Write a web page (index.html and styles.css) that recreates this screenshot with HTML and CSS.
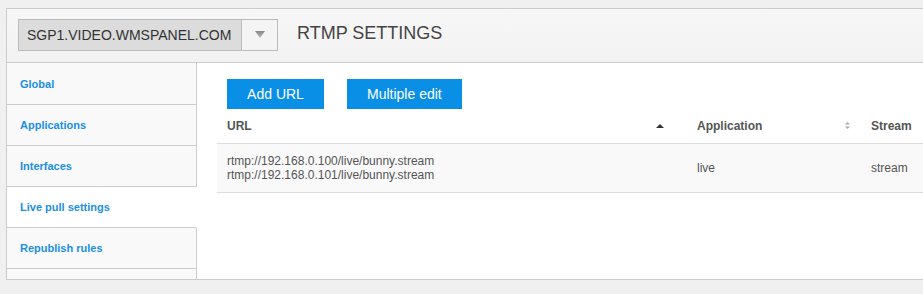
FILE: index.html
```html
<!DOCTYPE html>
<html lang="en">
<head>
  <meta charset="UTF-8">
  <title>RTMP Settings</title>
  <link rel="stylesheet" href="styles.css">
</head>
<body>

  <div class="panel">
    <!-- Server selector + page title -->
    <div class="panel-header">
      <div class="server-select">
        <span class="server-name">SGP1.VIDEO.WMSPANEL.COM</span>
        <span class="server-toggle">
          <svg width="10" height="7" viewBox="0 0 10 7">
            <defs>
              <linearGradient id="caret" x1="0" y1="0" x2="0" y2="1">
                <stop offset="0" stop-color="#8a8a8a"/>
                <stop offset="1" stop-color="#b5b5b5"/>
              </linearGradient>
            </defs>
            <polygon points="0,0 10,0 5,7" fill="url(#caret)"/>
          </svg>
        </span>
      </div>
      <h1 class="page-title">RTMP SETTINGS</h1>
    </div>

    <div class="panel-body">
      <!-- Left menu -->
      <ul class="side-menu">
        <li><a href="#">Global</a></li>
        <li><a href="#">Applications</a></li>
        <li><a href="#">Interfaces</a></li>
        <li class="active"><a href="#">Live pull settings</a></li>
        <li><a href="#">Republish rules</a></li>
        <li class="filler"></li>
      </ul>

      <!-- Main content -->
      <div class="content">
        <div class="toolbar">
          <button class="btn">Add URL</button>
          <button class="btn">Multiple edit</button>
        </div>

        <table class="grid">
          <thead>
            <tr>
              <th class="col-url">
                <div class="th-inner">URL
                  <svg class="sort-asc" width="8" height="4" viewBox="0 0 8 4"><polygon points="4,0 8,4 0,4" fill="#333"/></svg>
                </div>
              </th>
              <th class="col-app">
                <div class="th-inner">Application
                  <svg class="sort-both" width="5" height="7" viewBox="0 0 5 7"><polygon points="2.5,0 5,2.5 0,2.5" fill="#aaa"/><polygon points="0,4.5 5,4.5 2.5,7" fill="#aaa"/></svg>
                </div>
              </th>
              <th class="col-stream">Stream</th>
            </tr>
          </thead>
          <tbody>
            <tr>
              <td>rtmp://192.168.0.100/live/bunny.stream<br>rtmp://192.168.0.101/live/bunny.stream</td>
              <td>live</td>
              <td>stream</td>
            </tr>
          </tbody>
        </table>
      </div>
    </div>
  </div>

</body>
</html>
```

FILE: styles.css
```css
/* General */
html, body {
  overflow: hidden;
}

body {
  margin: 0;
  background: #f0f0f0;
  font-family: "Liberation Sans", Arial, sans-serif;
  color: #555;
}

.panel {
  margin: 8px -40px 0 6px;
  border: 1px solid #ccc;
  background: #fff;
}

/* Header */
.panel-header {
  display: flex;
  align-items: center;
  height: 53px;
  padding-left: 11px;
  border-bottom: 1px solid #ccc;
  background: linear-gradient(#f7f7f7, #f2f2f2);
}

.server-select {
  display: flex;
  height: 30px;
  margin-top: -2px;
  border: 1px solid #bbb;
}

.server-name {
  width: 214px;
  padding-left: 8px;
  background: #dcdcdc;
  color: #333;
  font-size: 14px;
  line-height: 31px;
}

.server-toggle {
  display: flex;
  align-items: center;
  justify-content: center;
  width: 35px;
  border-left: 1px solid #bbb;
  background: #f4f4f4;
}

.page-title {
  margin: -4px 0 0 19px;
  font-size: 18px;
  font-weight: normal;
  color: #444;
}

/* Body */
.panel-body {
  display: flex;
  height: 216px;
  overflow: hidden;
}

.side-menu {
  list-style: none;
  margin: 0;
  padding: 0;
  width: 190px;
  flex-shrink: 0;
}

.side-menu li {
  height: 40px;
  border-bottom: 1px solid #ccc;
  border-right: 1px solid #ccc;
  background: #f9f9f9;
}

.side-menu li:first-child {
  height: 41px;
}

.side-menu li.active {
  background: #fff;
  border-right-color: #fff;
}

.side-menu li.filler {
  height: 40px;
}

.side-menu a {
  display: block;
  padding-left: 13px;
  line-height: 40px;
  color: #1a8fe6;
  font-size: 11px;
  font-weight: bold;
  text-decoration: none;
}

.side-menu li:first-child a {
  line-height: 42px;
}

.content {
  flex: 1;
  padding: 16px 0 0 20px;
}

.toolbar {
  display: flex;
  gap: 23px;
  padding-left: 10px;
}

.btn {
  height: 30px;
  padding: 0 20px;
  border: none;
  background: #0a8fe6;
  color: #fff;
  font-family: inherit;
  font-size: 14px;
  cursor: pointer;
}

.toolbar .btn:first-child {
  width: 97px;
}

/* Table */
.grid {
  border-collapse: collapse;
  width: 760px;
  margin-top: 1px;
}

.grid th {
  height: 31px;
  padding: 0 10px 2px;
  border-bottom: 1px solid #ddd;
  text-align: left;
  font-size: 12px;
  font-weight: bold;
  color: #555;
}

.th-inner {
  display: flex;
  align-items: center;
  justify-content: space-between;
}

.col-url {
  width: 450px;
}

.col-url .th-inner {
  padding-right: 13px;
}

.col-app {
  width: 154px;
}

.col-app .th-inner {
  padding-right: 1px;
}

.grid td {
  padding: 10px;
  border-bottom: 1px solid #ddd;
  background: #f9f9f9;
  font-size: 12px;
  line-height: 14px;
  color: #555;
}
```
